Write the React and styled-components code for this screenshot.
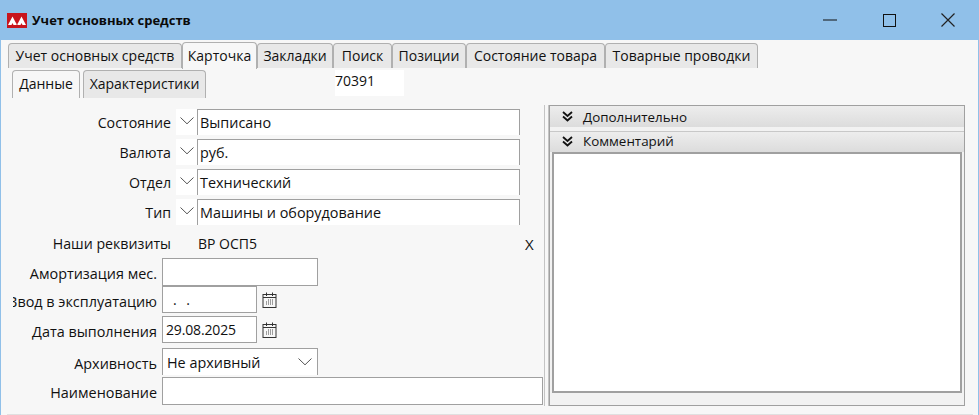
import React from "react";
import styled, { createGlobalStyle } from "styled-components";

const GlobalStyle = createGlobalStyle`
  html, body {
    margin: 0;
    padding: 0;
    background: #f7f7f7;
    overflow: hidden;
  }
  * { box-sizing: border-box; }
`;

const mainTabs = [
  { label: "Учет основных средств", width: 174 },
  { label: "Карточка", width: 75, active: true },
  { label: "Закладки", width: 76 },
  { label: "Поиск", width: 59 },
  { label: "Позиции", width: 74 },
  { label: "Состояние товара", width: 139 },
  { label: "Товарные проводки", width: 153 },
];

const comboRows = [
  { label: "Состояние", value: "Выписано" },
  { label: "Валюта", value: "руб." },
  { label: "Отдел", value: "Технический" },
  { label: "Тип", value: "Машины и оборудование" },
];

const Chevron = ({ size = 14 }) => (
  <svg width={size} height="8" viewBox="0 0 14 8" fill="none">
    <path d="M0.5 0.5 L7 6.8 L13.5 0.5" stroke="#555" strokeWidth="1" />
  </svg>
);

const DoubleChevron = () => (
  <svg width="11" height="11" viewBox="0 0 11 11" fill="none">
    <path d="M1 1 L5.5 5 L10 1 M1 5.5 L5.5 9.5 L10 5.5" stroke="#111" strokeWidth="1.8" />
  </svg>
);

const Calendar = () => (
  <svg width="15" height="16" viewBox="0 0 15 16" fill="none">
    <rect x="1" y="2.5" width="13" height="13" fill="#f7f7f7" stroke="#333" />
    <path d="M1 5.5 H14" stroke="#333" />
    <path d="M4.5 0.5 V4 M10.5 0.5 V4" stroke="#333" />
    <path
      d="M6 8 H7 M8 8 H9 M10 8 H11 M4 10 H5 M6 10 H7 M8 10 H9 M10 10 H11 M4 12 H5 M6 12 H7 M8 12 H9 M10 12 H11"
      stroke="#444"
    />
  </svg>
);

const Logo = () => (
  <LogoBox>
    <svg width="18" height="9" viewBox="0 0 18 9">
      <path
        d="M0 9 L4.5 0.5 L9 9 L13.5 0.5 L18 9 H14.5 L13.5 7 L12.5 9 H10 L9 7.5 L8 9 H5.5 L4.5 7 L3.5 9 Z"
        fill="#fff"
      />
    </svg>
  </LogoBox>
);

export default function App() {
  return (
    <Window>
      <GlobalStyle />
      <TitleBar>
        <Logo />
        <Title>Учет основных средств</Title>
        <Controls>
          <Control>
            <svg width="14" height="14" viewBox="0 0 14 14" fill="none">
              <path d="M0 7 H14" stroke="#111" strokeWidth="1" />
            </svg>
          </Control>
          <Control>
            <svg width="13" height="13" viewBox="0 0 13 13" fill="none">
              <rect x="0.5" y="0.5" width="12" height="12" stroke="#111" strokeWidth="1" />
            </svg>
          </Control>
          <Control>
            <svg width="14" height="14" viewBox="0 0 14 14" fill="none">
              <path d="M0.5 0.5 L13.5 13.5 M13.5 0.5 L0.5 13.5" stroke="#222" strokeWidth="1.2" />
            </svg>
          </Control>
        </Controls>
      </TitleBar>

      <Content>
        <TabBar>
          {mainTabs.map((t) => (
            <Tab key={t.label} $width={t.width} $active={t.active}>
              {t.label}
            </Tab>
          ))}
        </TabBar>

        <SubBar>
          <SubTab $width={68} $active>
            Данные
          </SubTab>
          <SubTab $width={123}>Характеристики</SubTab>
          <DocNumber>70391</DocNumber>
        </SubBar>

        <Body>
          <Form>
            {comboRows.map((r) => (
              <ComboRow key={r.label}>
                <ComboLabel>{r.label}</ComboLabel>
                <ChevronBox>
                  <Chevron />
                </ChevronBox>
                <ComboInput>{r.value}</ComboInput>
              </ComboRow>
            ))}

            <RequisitesRow>
              <ComboLabel>Наши реквизиты</ComboLabel>
              <Requisites>ВР ОСП5</Requisites>
              <ClearMark>X</ClearMark>
            </RequisitesRow>

            <FieldRow $height={28}>
              <FieldLabel>Амортизация мес.</FieldLabel>
              <TextBox $width={156} />
            </FieldRow>
            <FieldRow $height={30}>
              <FieldLabel $clip>Ввод в эксплуатацию</FieldLabel>
              <TextBox $width={95} $height={27}>
                <DateMask>. .</DateMask>
              </TextBox>
              <CalendarSlot>
                <Calendar />
              </CalendarSlot>
            </FieldRow>
            <FieldRow $height={32}>
              <FieldLabel>Дата выполнения</FieldLabel>
              <TextBox $width={95} $height={27}>
                <DateValue>29.08.2025</DateValue>
              </TextBox>
              <CalendarSlot>
                <Calendar />
              </CalendarSlot>
            </FieldRow>
            <FieldRow $height={29}>
              <FieldLabel>Архивность</FieldLabel>
              <SelectBox>
                Не архивный
                <Chevron />
              </SelectBox>
            </FieldRow>
            <FieldRow $height={28}>
              <FieldLabel>Наименование</FieldLabel>
              <TextBox $width={381} />
            </FieldRow>
          </Form>

          <Splitter />

          <SidePanel>
            <SectionHead>
              <DoubleChevron />
              Дополнительно
            </SectionHead>
            <SectionHead $second>
              <DoubleChevron />
              Комментарий
            </SectionHead>
            <CommentBox />
          </SidePanel>
        </Body>
        <BottomLine />
      </Content>
    </Window>
  );
}

const Window = styled.div`
  width: 979px;
  height: 415px;
  display: flex;
  flex-direction: column;
  overflow: hidden;
  font-family: "Open Sans", "Noto Sans", sans-serif;
  font-size: 14px;
  color: #111;
`;

const TitleBar = styled.div`
  height: 40px;
  flex: none;
  display: flex;
  align-items: center;
  padding-left: 7px;
  background: #90c0e9;
`;

const LogoBox = styled.div`
  width: 20px;
  height: 15px;
  background: #c8141c;
  display: flex;
  align-items: center;
  justify-content: center;
  margin-right: 5px;
`;

const Title = styled.div`
  font-family: "Open Sans", sans-serif;
  font-weight: 700;
  font-size: 13px;
  color: #0a0a0a;
`;

const Controls = styled.div`
  margin-left: auto;
  display: flex;
  align-items: center;
  padding-right: 24px;
  gap: 45px;
`;

const Control = styled.div`
  display: flex;
  width: 14px;
  justify-content: center;
`;

const Content = styled.div`
  flex: 1;
  min-height: 0;
  display: flex;
  flex-direction: column;
  background: #f7f7f7;
  border-left: 1px solid #90c0e9;
  border-right: 1px solid #90c0e9;
`;

const TabBar = styled.div`
  display: flex;
  height: 28px;
  flex: none;
  padding: 2px 0 0 7px;
  align-items: flex-start;
`;

const Tab = styled.div`
  width: ${(p) => p.$width}px;
  height: ${(p) => (p.$active ? 27 : 25)}px;
  margin-top: ${(p) => (p.$active ? 0 : 1)}px;
  flex: none;
  display: flex;
  align-items: center;
  justify-content: center;
  padding-bottom: 2px;
  white-space: nowrap;
  background: ${(p) => (p.$active ? "#f7f7f7" : "#e8e8e8")};
  border: 1px solid #b0b0b0;
  border-bottom: none;
  border-radius: 4px 4px 0 0;
`;

const SubBar = styled.div`
  display: flex;
  height: 33px;
  flex: none;
  padding: 2px 0 0 11px;
  align-items: flex-start;
`;

const SubTab = styled(Tab)`
  height: 28px;
  margin-top: 0;
  margin-right: ${(p) => (p.$active ? 3 : 0)}px;
`;

const DocNumber = styled.div`
  margin-left: 129px;
  width: 69px;
  height: 26px;
  background: #fff;
  line-height: 22px;
`;

const Body = styled.div`
  flex: 1;
  min-height: 0;
  display: flex;
  align-items: flex-start;
`;

const Form = styled.div`
  width: 543px;
  flex: none;
  display: flex;
  flex-direction: column;
  padding-top: 8px;
`;

const ComboRow = styled.div`
  display: flex;
  align-items: stretch;
  height: 26px;
  margin-bottom: 4px;
`;

const ComboLabel = styled.div`
  width: 170px;
  flex: none;
  font-size: 14.2px;
  text-align: right;
  line-height: 28px;
  white-space: nowrap;
`;

const ChevronBox = styled.div`
  width: 21px;
  margin-left: 5px;
  background: #fff;
  display: flex;
  align-items: center;
  justify-content: center;
  padding-bottom: 2px;
`;

const ComboInput = styled.div`
  width: 323px;
  background: #fff;
  border: 1px solid #a0a0a0;
  border-bottom: none;
  padding-left: 2px;
  font-size: 14.4px;
  line-height: 25px;
  white-space: nowrap;
`;

const RequisitesRow = styled.div`
  display: flex;
  height: 29px;
  align-items: center;
  line-height: 28px;
`;

const Requisites = styled.div`
  margin-left: 27px;
  width: 327px;
`;

const ClearMark = styled.div`
  font-size: 15px;
`;

const FieldRow = styled.div`
  display: flex;
  align-items: flex-start;
  height: ${(p) => p.$height}px;
`;

const FieldLabel = styled.div`
  width: ${(p) => (p.$clip ? 144 : 156)}px;
  flex: none;
  margin-left: ${(p) => (p.$clip ? 12 : 0)}px;
  margin-right: 5px;
  font-size: 14.4px;
  text-align: right;
  white-space: nowrap;
  line-height: 31px;
  overflow: hidden;
  direction: ${(p) => (p.$clip ? "rtl" : "ltr")};
`;

const TextBox = styled.div`
  width: ${(p) => p.$width}px;
  height: ${(p) => p.$height || 28}px;
  background: #fff;
  border: 1px solid #a0a0a0;
  padding-left: 3px;
  line-height: 26px;
`;

const DateMask = styled.span`
  margin-left: 7px;
  letter-spacing: 3px;
`;

const DateValue = styled.span`
  letter-spacing: -0.15px;
`;

const CalendarSlot = styled.div`
  margin-left: 5px;
  padding-top: 6px;
  height: 28px;
`;

const SelectBox = styled.div`
  width: 156px;
  height: 27px;
  background: #fff;
  border: 1px solid #a0a0a0;
  border-bottom: none;
  padding: 0 5px 0 4px;
  font-size: 14.4px;
  display: flex;
  align-items: center;
  justify-content: space-between;
`;

const Splitter = styled.div`
  width: 5px;
  height: 301px;
  margin-top: 4px;
  flex: none;
  border-left: 1px solid #c4c4c4;
  border-right: 1px solid #c4c4c4;
`;

const SidePanel = styled.div`
  width: 416px;
  height: 301px;
  margin-top: 4px;
  flex: none;
  display: flex;
  flex-direction: column;
  background: #f2f2f2;
  border: 1px solid #a0a0a0;
`;

const SectionHead = styled.div`
  height: 21px;
  flex: none;
  display: flex;
  align-items: center;
  gap: 10px;
  padding-left: 12px;
  padding-bottom: ${(p) => (p.$second ? 2 : 0)}px;
  margin: ${(p) => (p.$second ? "4px 0 0" : "0")};
  font-size: 13.4px;
  background: linear-gradient(#ededed, #dcdcdc);
  border-top: ${(p) => (p.$second ? "1px solid #c8c8c8" : "none")};
`;

const CommentBox = styled.div`
  width: 410px;
  height: 241px;
  flex: none;
  margin-left: 2px;
  background: #fff;
  border: 2px solid #a0a0a0;
`;

const BottomLine = styled.div`
  height: 1px;
  flex: none;
  margin: 0 5px 0 6px;
  background: #e0e0e0;
`;
